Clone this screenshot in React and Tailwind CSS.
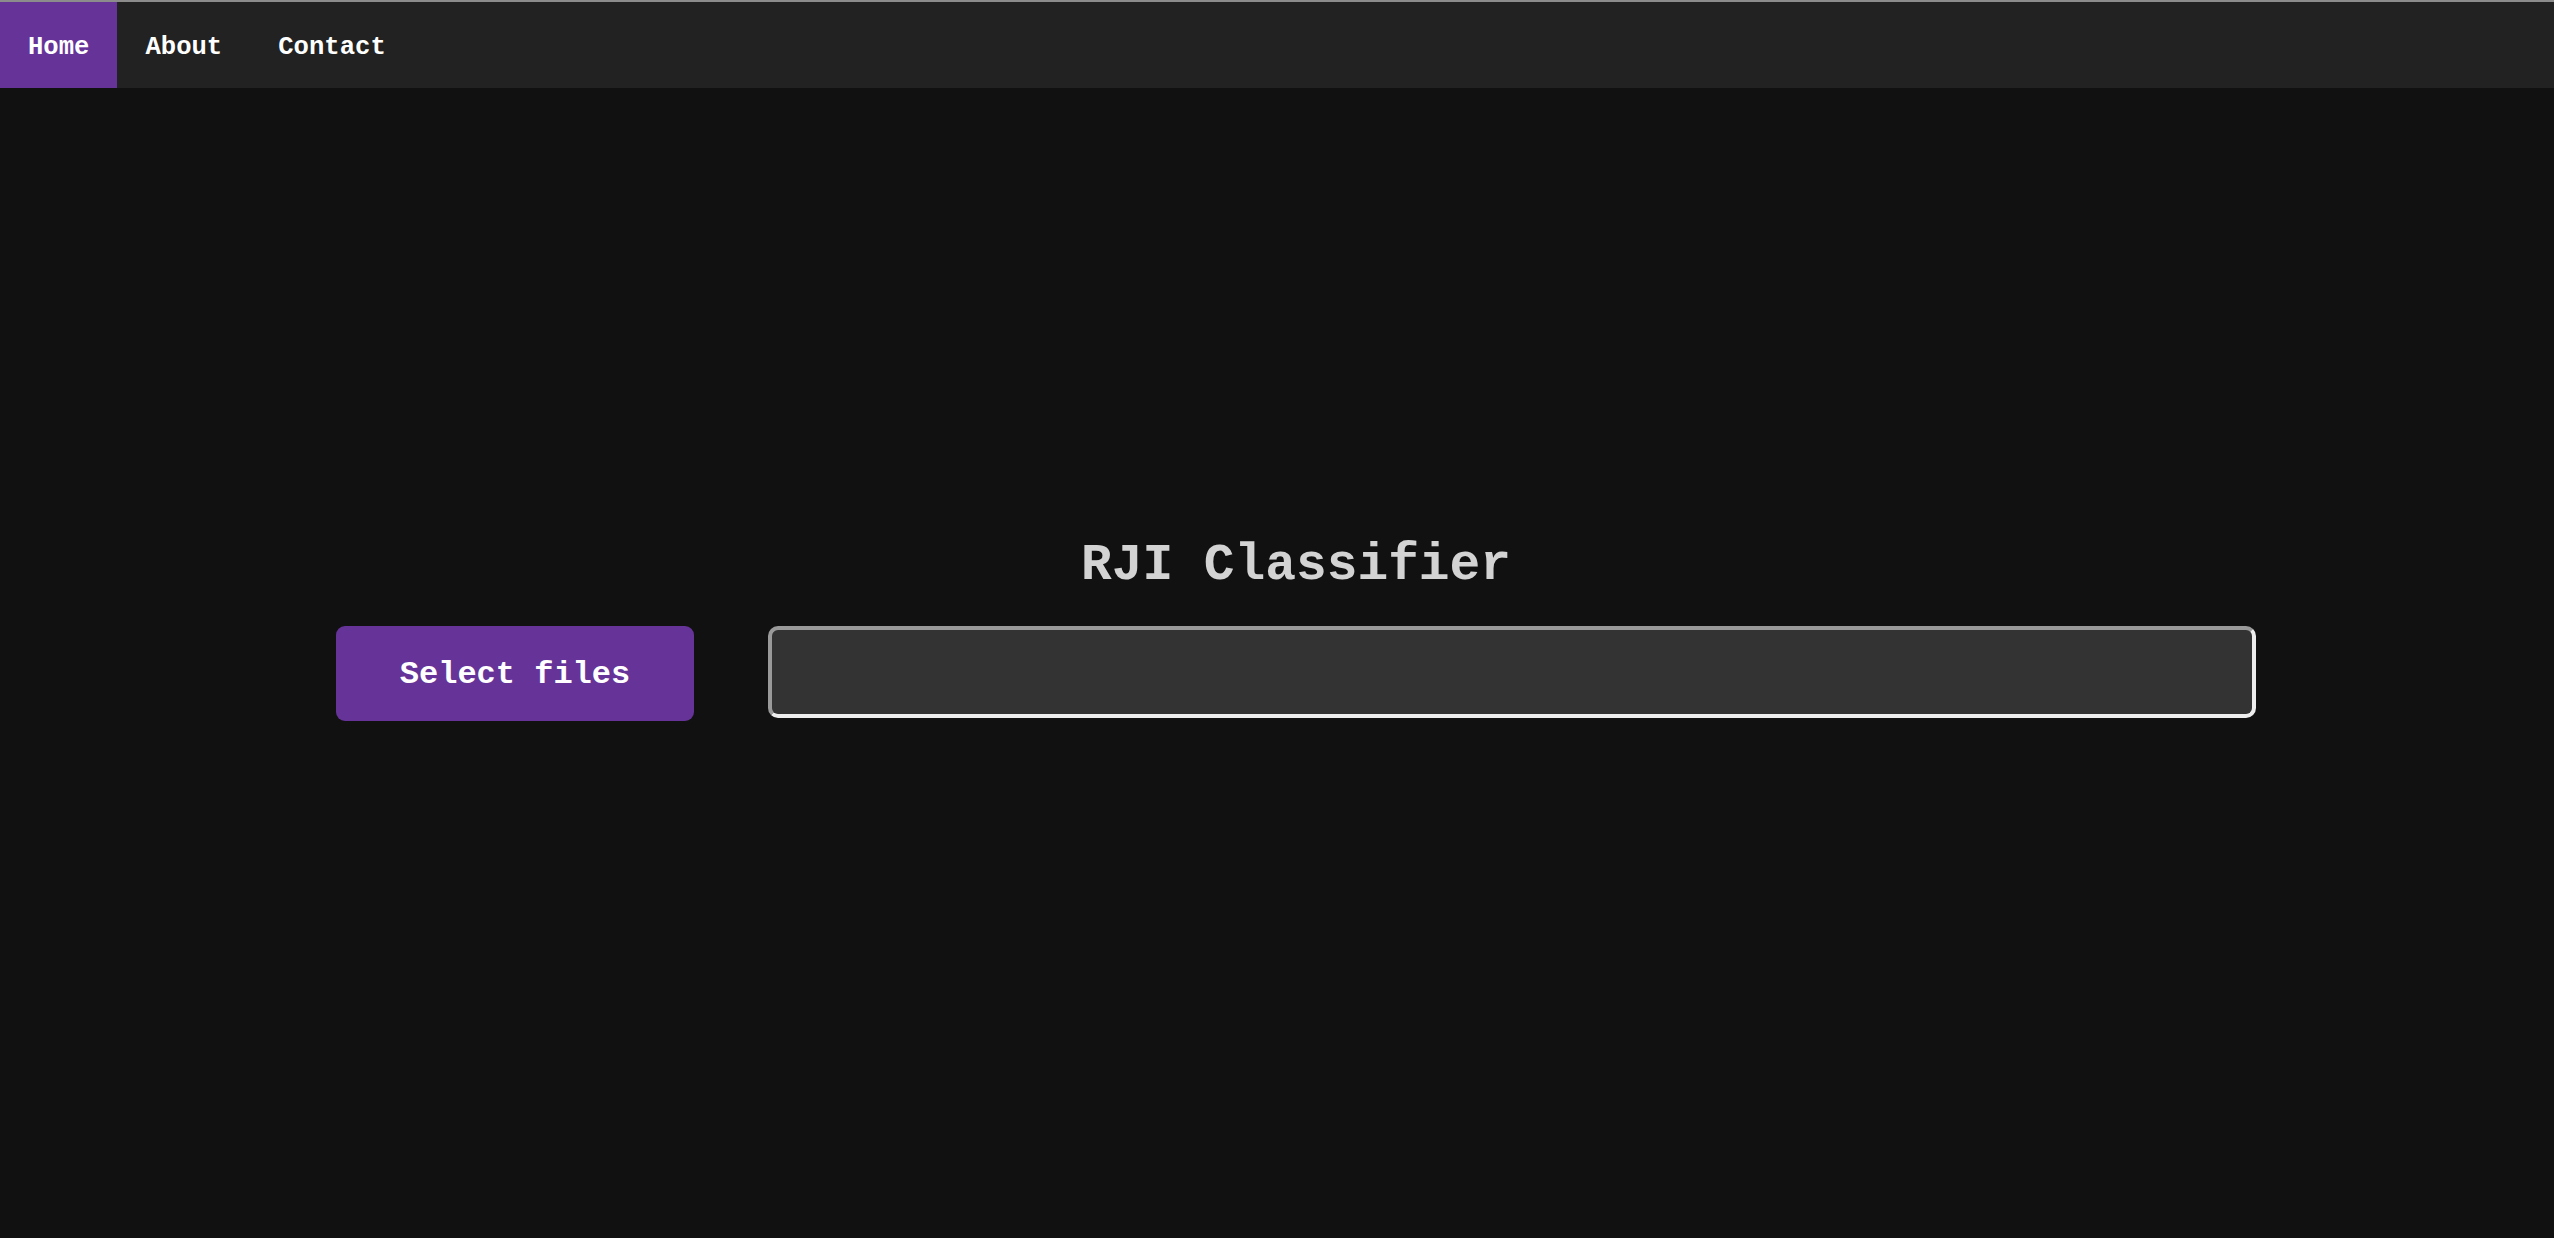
import React from 'react';

const mono = { fontFamily: '"Liberation Mono", "Courier New", monospace' };

const NavLink = ({ label, active }) => (
  <a
    href="#"
    className={
      'flex items-center h-full px-[28px] pt-[6px] text-[25.6px] font-bold text-white ' +
      (active ? 'bg-[#663399]' : '')
    }
  >
    {label}
  </a>
);

const App = () => {
  return (
    <div className="min-h-screen bg-[#111111] flex flex-col" style={mono}>
      <div className="h-[2px] bg-[#8c8c8c]" />
      <nav className="h-[86px] bg-[#222222] flex">
        <NavLink label="Home" active />
        <NavLink label="About" />
        <NavLink label="Contact" />
      </nav>

      <main className="pl-[336px] pr-[298px] pt-[452px]">
        <h1 className="text-center text-[51.2px] leading-none font-bold text-[#d3d3d3]">
          RJI Classifier
        </h1>
        <div className="mt-[35px] flex items-start gap-[74px]">
          <button className="w-[358px] h-[95px] shrink-0 rounded-[9px] bg-[#663399] pt-[3px] text-white text-[32px] font-bold">
            Select files
          </button>
          <div className="flex-1 h-[92px] rounded-[10px] bg-[#333333] border-[4px] border-t-[#9a9a9a] border-l-[#9a9a9a] border-b-[#eeeeee] border-r-[#eeeeee]" />
        </div>
      </main>
    </div>
  );
};

export default App;
